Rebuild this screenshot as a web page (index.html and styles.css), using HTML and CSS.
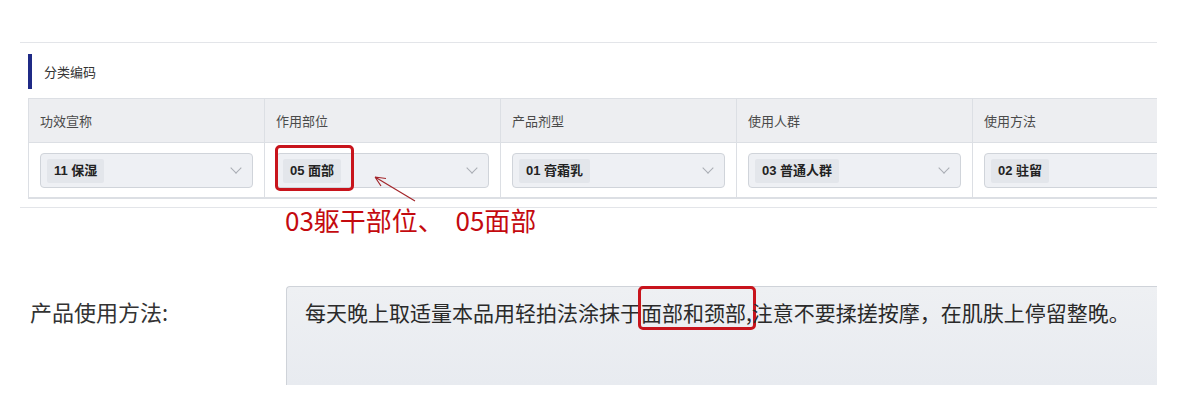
FILE: index.html
```html
<!DOCTYPE html>
<html lang="zh-CN">
  <head>
    <meta charset="UTF-8" />
    <meta name="viewport" content="width=device-width, initial-scale=1.0" />
    <title>分类编码</title>
    <link rel="stylesheet" href="styles.css">
  </head>
  <body>
    <div class="page">
      <div class="top-rule"></div>

      <div class="section-title">分类编码</div>

      <div class="code-table">
        <div class="table-row table-head">
          <div class="cell">功效宣称</div>
          <div class="cell">作用部位</div>
          <div class="cell">产品剂型</div>
          <div class="cell">使用人群</div>
          <div class="cell">使用方法</div>
        </div>
        <div class="table-row table-body">
          <div class="cell">
            <div class="select">
              <span class="tag">11 保湿</span>
              <span class="chevron"></span>
            </div>
          </div>
          <div class="cell">
            <div class="select marked">
              <span class="tag">05 面部</span>
              <span class="chevron"></span>
            </div>
          </div>
          <div class="cell">
            <div class="select">
              <span class="tag">01 膏霜乳</span>
              <span class="chevron"></span>
            </div>
          </div>
          <div class="cell">
            <div class="select">
              <span class="tag">03 普通人群</span>
              <span class="chevron"></span>
            </div>
          </div>
          <div class="cell">
            <div class="select">
              <span class="tag">02 驻留</span>
              <span class="chevron"></span>
            </div>
          </div>
        </div>
      </div>

      <div class="bottom-rule"></div>

      <div class="note">03躯干部位、&nbsp; 05面部</div>

      <svg class="arrow" width="70" height="40" viewBox="0 0 70 40">
        <path d="M20 7 L60 31 M20 7 L31 8.5 M20 7 L26 16" fill="none" stroke="#a3262b" stroke-width="1.2" />
      </svg>

      <div class="usage">
        <div class="usage-label">产品使用方法:</div>
        <div class="usage-box">每天晚上取适量本品用轻拍法涂抹于<span class="highlight">面部和颈部,</span>注意不要揉搓按摩，在肌肤上停留整晚。</div>
      </div>
    </div>
  </body>
</html>
```

FILE: styles.css
```css
:root {
  --line: #e3e5e9;
  --cell-border: #dcdfe4;
  --head-bg: #edeef1;
  --select-bg: #eef0f4;
  --select-border: #d0d4da;
  --mark: #c8141c;
  --navy: #1f2a86;
}

body {
  margin: 0;
  background: #fff;
  font-family: "Noto Sans CJK SC", "Liberation Sans", sans-serif;
  color: #333;
}

.page {
  position: relative;
  width: 1137px;
  padding: 42px 0 0 20px;
}

.top-rule {
  height: 1px;
  background: var(--line);
}

.section-title {
  margin: 11px 0 0 8px;
  height: 35px;
  line-height: 35px;
  padding-left: 12px;
  border-left: 4px solid var(--navy);
  font-size: 13px;
  color: #333;
}

.code-table {
  margin: 9px 0 0 8px;
  width: 1129px;
  overflow: hidden;
  border-top: 1px solid var(--cell-border);
  border-bottom: 2px solid var(--cell-border);
  border-left: 1px solid var(--cell-border);
  box-sizing: border-box;
}

.table-row {
  display: grid;
  grid-template-columns: repeat(5, 236px);
}

.table-head {
  height: 43px;
  background: var(--head-bg);
  border-bottom: 1px solid var(--cell-border);
}

.table-head .cell {
  line-height: 43px;
  padding-left: 11px;
  font-size: 13px;
  color: #4a4a4a;
}

.cell {
  border-right: 1px solid var(--cell-border);
  box-sizing: border-box;
}

.table-body {
  height: 54px;
}

.table-body .cell {
  padding: 10px 11px 0;
}

.select {
  position: relative;
  display: flex;
  align-items: center;
  justify-content: space-between;
  height: 35px;
  padding: 0 12px 0 6px;
  background: var(--select-bg);
  border: 1px solid var(--select-border);
  border-radius: 4px;
  box-sizing: border-box;
}

.table-body .cell:last-child .select {
  width: 300px;
}

.tag {
  padding: 0 7px;
  line-height: 24px;
  background: #e3e6eb;
  border-radius: 2px;
  font-family: "Liberation Sans", "Noto Sans CJK SC", sans-serif;
  font-size: 13px;
  font-weight: 700;
  color: #222;
}

.chevron {
  width: 7px;
  height: 7px;
  margin-top: -5px;
  border-right: 1px solid #a9adb4;
  border-bottom: 1px solid #a9adb4;
  transform: rotate(45deg);
}

.select.marked::after {
  content: "";
  position: absolute;
  left: -2px;
  top: -9px;
  width: 79px;
  height: 46px;
  border: 3px solid var(--mark);
  border-radius: 5px;
  box-sizing: border-box;
}

.bottom-rule {
  margin-top: 8px;
  height: 1px;
  background: var(--line);
}

.note {
  margin: -3px 0 0 265px;
  line-height: 30px;
  font-size: 26px;
  color: #c40a0f;
}

.arrow {
  position: absolute;
  left: 355px;
  top: 170px;
}

.usage {
  display: flex;
  margin-top: 51px;
}

.usage-label {
  width: 266px;
  padding: 11px 0 0 10px;
  line-height: 28px;
  font-size: 22px;
  color: #333;
  box-sizing: border-box;
}

.usage-box {
  width: 871px;
  height: 99px;
  padding: 11px 18px 0;
  line-height: 28px;
  font-size: 21px;
  color: #2a2a2a;
  background: linear-gradient(180deg, #eef0f3 0%, #e8ebf0 100%);
  border-top: 1px solid #cfd3d9;
  border-left: 1px solid #cfd3d9;
  border-radius: 4px 0 0 0;
  box-sizing: border-box;
}

.highlight {
  padding: 8px 1px 0 0;
  margin: 0 -4px 0 -3px;
  border: 3px solid var(--mark);
  border-radius: 5px;
}
```
